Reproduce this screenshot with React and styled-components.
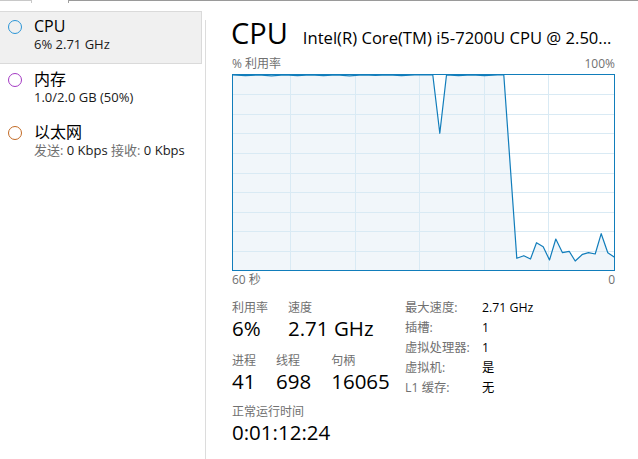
import React from 'react';
import styled, { createGlobalStyle } from 'styled-components';

const Global = createGlobalStyle`
  html, body { margin: 0; padding: 0; background: #fff; }
  body {
    font-family: "Open Sans", "Noto Sans CJK SC", sans-serif;
    color: #000;
    overflow: hidden;
    width: 638px;
    height: 459px;
  }
`;

const Page = styled.div`
  width: 638px;
  height: 459px;
  display: flex;
  flex-direction: column;
`;

const TabStrip = styled.div`
  display: flex;
  height: 1px;
  flex: none;
`;

const TabLine = styled.div`
  height: 1px;
  background: ${p => p.$color};
  width: ${p => (p.$w ? `${p.$w}px` : 'auto')};
  flex: ${p => (p.$w ? 'none' : '1')};
`;

const TabGap = styled.div`
  width: 38px;
  height: 3px;
  border-left: 1px solid #c8c8c8;
  border-right: 1px solid #a0a0a0;
  box-sizing: border-box;
`;

const Main = styled.div`
  flex: 1;
  display: flex;
  min-height: 0;
`;

const Sidebar = styled.nav`
  width: 202px;
  flex: none;
  padding-top: 10px;
  display: flex;
  flex-direction: column;
`;

const Item = styled.div`
  height: 53px;
  box-sizing: border-box;
  display: flex;
  align-items: flex-start;
  gap: 13px;
  padding: 4px 0 0 9px;
  background: ${p => (p.$active ? '#f0f0f0' : 'transparent')};
  border: 1px solid ${p => (p.$active ? '#dadada' : 'transparent')};
  border-left: none;
`;

const Dot = styled.span`
  width: 14px;
  height: 14px;
  box-sizing: border-box;
  border-radius: 50%;
  border: 1.6px solid ${p => p.$color};
  margin-top: 4px;
  margin-left: -1px;
  margin-right: -1px;
  flex: none;
`;

const ItemText = styled.div`
  display: flex;
  flex-direction: column;
`;

const ItemTitle = styled.div`
  font-size: 16px;
  line-height: 20px;
  color: #000;
`;

const ItemSub = styled.div`
  font-size: 13px;
  line-height: 17px;
  color: #1a1a1a;
  white-space: nowrap;
`;

const Muted = styled.span`
  color: #707070;
`;

const Divider = styled.div`
  width: 1px;
  margin: 19px 0 0 3px;
  background: #dcdcdc;
  flex: none;
`;

const Content = styled.section`
  flex: none;
  width: 383px;
  margin-left: 26px;
  padding-top: 17px;
  display: flex;
  flex-direction: column;
`;

const Header = styled.div`
  display: flex;
  align-items: baseline;
  gap: 15px;
  white-space: nowrap;
`;

const BigTitle = styled.h1`
  margin: 0 0 0 -1px;
  font-weight: 400;
  font-size: 29px;
  line-height: 29px;
`;

const Model = styled.div`
  font-size: 16.6px;
  line-height: 20px;
`;

const AxisRow = styled.div`
  display: flex;
  justify-content: space-between;
  font-size: 12px;
  line-height: 16px;
  color: #707070;
  margin-top: ${p => p.$mt}px;
`;

const Chart = styled.svg`
  display: block;
  margin-top: ${p => p.$mt}px;
`;

const Stats = styled.div`
  display: flex;
  margin-top: 12px;
`;

const LeftStats = styled.div`
  width: 173px;
  flex: none;
  display: flex;
  flex-direction: column;
`;

const StatRow = styled.div`
  display: flex;
  gap: 20px;
  margin-top: ${p => p.$mt || 0}px;
`;

const Stat = styled.div`
  display: flex;
  flex-direction: column;
`;

const StatLabel = styled.div`
  font-size: 12px;
  line-height: 16px;
  color: #707070;
`;

const StatValue = styled.div`
  font-size: 20.5px;
  line-height: 25px;
  color: #000;
  white-space: nowrap;
`;

const InfoGrid = styled.dl`
  margin: -3px 0 0 0;
  display: grid;
  grid-template-columns: 77px auto;
  grid-auto-rows: 20px;
  align-items: center;
  font-size: 12.3px;
`;

const InfoLabel = styled.dt`
  color: #707070;
  margin: 0;
`;

const InfoValue = styled.dd`
  color: #000;
  margin: 0;
`;

const W = 383;
const H = 197;
const X0 = 232;
const Y0 = 74;

const raw = [
  [232, 75], [245, 75.6], [258, 75], [271, 75.8], [284, 75], [297, 75.7], [310, 75], [323, 75.6],
  [336, 75], [349, 75.8], [362, 75], [375, 75.5], [388, 75], [401, 75.6], [414, 75], [426, 75],
  [432.3, 75], [439.3, 133.3], [446, 75], [458, 75.6], [471, 75], [484, 75.7], [497, 75], [503.3, 75],
  [516.3, 258.3], [523.3, 255.7], [530, 259], [536, 242.7], [542.7, 246.7], [549, 260],
  [555.3, 239], [562, 252.7], [568.7, 251.3], [574.7, 261], [582, 254.3], [588, 252.7],
  [594.7, 254], [600.7, 233.7], [607.3, 252.7], [614, 257.3],
];
const pts = raw.map(([x, y]) => [x - X0 + 0.5, y - Y0]);
const linePath = pts.map(([x, y], i) => `${i ? 'L' : 'M'}${x.toFixed(1)},${y.toFixed(1)}`).join(' ');
const areaPath = `${linePath} L${W - 0.5},${H - 0.5} L0.5,${H - 0.5} Z`;
const hLines = [1, 2, 3, 4, 5, 6, 7, 8, 9].map(k => 0.5 + 19.6 * k);
const vLines = [58.5, 123.5, 187.5, 252.5, 316.5];

function CpuChart() {
  return (
    <Chart $mt={2} width={W} height={H} viewBox={`0 0 ${W} ${H}`}>
      <rect x="0" y="0" width={W} height={H} fill="#fff" />
      <path d={areaPath} fill="#f1f6fa" />
      {hLines.map(y => (
        <line key={`h${y}`} x1="0" x2={W} y1={Math.round(y) + 0.5} y2={Math.round(y) + 0.5} stroke="#d9eaf4" strokeWidth="1" />
      ))}
      {vLines.map(x => (
        <line key={`v${x}`} x1={x} x2={x} y1="0" y2={H} stroke="#d9eaf4" strokeWidth="1" />
      ))}
      <path d={linePath} fill="none" stroke="#117dbb" strokeWidth="1.2" strokeLinejoin="round" />
      <rect x="0.5" y="0.5" width={W - 1} height={H - 1} fill="none" stroke="#117dbb" strokeWidth="1" />
    </Chart>
  );
}

const items = [
  { key: 'cpu', color: '#2b95d6', title: 'CPU', sub: <>6% 2.71 GHz</>, active: true },
  { key: 'mem', color: '#a43ac4', title: '内存', sub: <>1.0/2.0 GB (50%)</> },
  {
    key: 'eth',
    color: '#c26a25',
    title: '以太网',
    sub: (
      <>
        <Muted>发送:</Muted> 0 Kbps <Muted>接收:</Muted> 0 Kbps
      </>
    ),
  },
];

const info = [
  ['最大速度:', '2.71 GHz'],
  ['插槽:', '1'],
  ['虚拟处理器:', '1'],
  ['虚拟机:', '是'],
  ['L1 缓存:', '无'],
];

export default function App() {
  return (
    <Page>
      <Global />
      <TabStrip>
        <TabLine $w={31} $color="#c8c8c8" />
        <TabGap />
        <TabLine $color="#9a9a9a" />
      </TabStrip>
      <Main>
        <Sidebar>
          {items.map(it => (
            <Item key={it.key} $active={it.active}>
              <Dot $color={it.color} />
              <ItemText>
                <ItemTitle>{it.title}</ItemTitle>
                <ItemSub>{it.sub}</ItemSub>
              </ItemText>
            </Item>
          ))}
        </Sidebar>
        <Divider />
        <Content>
          <Header>
            <BigTitle>CPU</BigTitle>
            <Model>Intel(R) Core(TM) i5-7200U CPU @ 2.50...</Model>
          </Header>
          <AxisRow $mt={8}>
            <span>% 利用率</span>
            <span>100%</span>
          </AxisRow>
          <CpuChart />
          <AxisRow $mt={1}>
            <span>60 秒</span>
            <span>0</span>
          </AxisRow>
          <Stats>
            <LeftStats>
              <StatRow>
                <Stat>
                  <StatLabel>利用率</StatLabel>
                  <StatValue>6%</StatValue>
                </Stat>
                <Stat>
                  <StatLabel>速度</StatLabel>
                  <StatValue>2.71 GHz</StatValue>
                </Stat>
              </StatRow>
              <StatRow $mt={12}>
                <Stat>
                  <StatLabel>进程</StatLabel>
                  <StatValue>41</StatValue>
                </Stat>
                <Stat>
                  <StatLabel>线程</StatLabel>
                  <StatValue>698</StatValue>
                </Stat>
                <Stat>
                  <StatLabel>句柄</StatLabel>
                  <StatValue>16065</StatValue>
                </Stat>
              </StatRow>
              <StatRow $mt={10}>
                <Stat>
                  <StatLabel>正常运行时间</StatLabel>
                  <StatValue>0:01:12:24</StatValue>
                </Stat>
              </StatRow>
            </LeftStats>
            <InfoGrid>
              {info.map(([k, v]) => (
                <React.Fragment key={k}>
                  <InfoLabel>{k}</InfoLabel>
                  <InfoValue>{v}</InfoValue>
                </React.Fragment>
              ))}
            </InfoGrid>
          </Stats>
        </Content>
      </Main>
    </Page>
  );
}
